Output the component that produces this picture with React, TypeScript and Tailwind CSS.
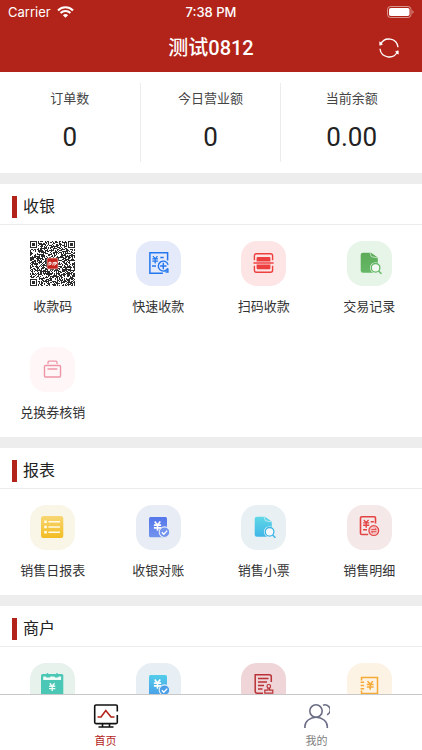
import type { ReactNode } from "react";

type Tile = { name: string; bg: string; icon: ReactNode; showName?: boolean };

function Yen({ x, y, color, s = 1 }: { x: number; y: number; color: string; s?: number }) {
  return (
    <path
      transform={`translate(${x} ${y}) scale(${s})`}
      d="M-2.8 -4.4 0 -1 2.8 -4.4M-3.6 -0.9H3.6M-3.6 1.9H3.6M0 -1V4.8"
      fill="none"
      stroke={color}
      strokeWidth="1.6"
    />
  );
}

function Art({ children }: { children: ReactNode }) {
  return (
    <svg viewBox="0 0 45 45" className="size-full" fill="none" aria-hidden="true">
      {children}
    </svg>
  );
}

const QR_SIZE = 45;

function inFinder(x: number, y: number) {
  const far = QR_SIZE - 8;
  return (x < 8 && y < 8) || (x >= far && y < 8) || (x < 8 && y >= far);
}

function qrModules() {
  let seed = 20812;
  let d = "";
  for (let y = 0; y < QR_SIZE; y++) {
    for (let x = 0; x < QR_SIZE; x++) {
      seed = (seed * 1103515245 + 12345) % 2147483648;
      if (!inFinder(x, y) && (seed >> 12) % 100 < 56) d += `M${x} ${y}h1v1h-1z`;
    }
  }
  return d;
}

const QR_PATH = qrModules();

function QrCode() {
  const far = QR_SIZE - 7;
  return (
    <svg viewBox={`0 0 ${QR_SIZE} ${QR_SIZE}`} className="size-full" aria-hidden="true">
      <path d={QR_PATH} fill="#2b2b2b" />
      {[[0, 0], [far, 0], [0, far]].map(([x, y]) => (
        <g key={`${x}-${y}`}>
          <rect x={x + 0.5} y={y + 0.5} width="6" height="6" fill="#fff" stroke="#2b2b2b" />
          <rect x={x + 2} y={y + 2} width="3" height="3" fill="#2b2b2b" />
        </g>
      ))}
      <rect x="17" y="17" width="11" height="11" rx="1.5" fill="#c4241c" stroke="#f0d8d6" strokeWidth="0.6" />
      <path d="M19 24.5v-3.200h2v2h-1.400M22.800 24.500l.6-3.400M24 21.400h2.400v1.400h-2.200M24.500 24.500l1-1.600" stroke="#fff" strokeWidth="1" fill="none" />
    </svg>
  );
}

function QuickPayIcon() {
  return (
    <Art>
      <path d="M31.600 19.500V11.800H13.900v20.500h13" stroke="#2477ee" strokeWidth="1.500" />
      <Yen x={19.2} y={18.6} s={0.8} color="#2477ee" />
      <path d="M24.300 16.600h3.400M16 25h4" stroke="#2477ee" strokeWidth="1.500" />
      <path d="M31.800 27.300a5 5 0 1 1 .3-3.600M31.900 27.600v4.200M29.600 31h3" stroke="#2477ee" strokeWidth="1.400" />
      <path d="M27.300 21.800v6.400M24.100 25h6.400" stroke="#2477ee" strokeWidth="1.400" />
    </Art>
  );
}

function ScanIcon() {
  return (
    <Art>
      <path d="M13.400 19.200v-4.400a2 2 0 0 1 2-2h14.200a2 2 0 0 1 2 2v4.400M13.400 24.800v4.400a2 2 0 0 0 2 2h14.200a2 2 0 0 0 2-2v-4.400" stroke="#ee3f3f" strokeWidth="1.400" />
      <path d="M12.400 22h20.200" stroke="#ee3f3f" strokeWidth="1.500" />
      <path d="M15.600 20.600v-3.400a1.200 1.200 0 0 1 1.200-1.200h11.400a1.200 1.200 0 0 1 1.200 1.200v3.400zM15.600 23.600v3.400a1.200 1.200 0 0 0 1.200 1.200h11.400a1.200 1.200 0 0 0 1.200-1.200v-3.400z" fill="#ee3f3f" />
    </Art>
  );
}

function DocSearchIcon({ id, from, to, bg }: { id: string; from: string; to: string; bg: string }) {
  return (
    <Art>
      <defs>
        <linearGradient id={id} x1="0" y1="0" x2="0" y2="1">
          <stop stopColor={from} />
          <stop offset="1" stopColor={to} />
        </linearGradient>
      </defs>
      <path d="M16 11.800h8l6.800 4.600V31.800H16a2.300 2.300 0 0 1-2.300-2.300V14.100A2.300 2.300 0 0 1 16 11.800z" fill={`url(#${id})`} />
      <path d="M23 11.800l1.400 4 6.400 1" stroke={bg} strokeWidth="0.700" />
      <circle cx="28.600" cy="26.800" r="5.600" fill={bg} />
      <circle cx="28.600" cy="26.800" r="4.300" fill="#fff" fillOpacity="0.5" stroke={to} strokeWidth="1.300" />
      <path d="M31.600 30l2.800 2.800" stroke={to} strokeWidth="1.600" />
    </Art>
  );
}

function VoucherIcon() {
  return (
    <Art>
      <rect x="14.500" y="18.500" width="16" height="11.500" rx="1" stroke="#f095a6" strokeWidth="1.400" />
      <path d="M18 17v-1.800a1 1 0 0 1 1-1h7a1 1 0 0 1 1 1V17M17.500 22h9.800" stroke="#f095a6" strokeWidth="1.300" />
    </Art>
  );
}

function ListIcon() {
  return (
    <Art>
      <defs>
        <linearGradient id="list" x1="0" y1="0" x2="0" y2="1">
          <stop stopColor="#f8d673" />
          <stop offset="1" stopColor="#f2bd22" />
        </linearGradient>
      </defs>
      <rect x="11" y="11" width="22.300" height="22" rx="2.500" fill="url(#list)" />
      <path d="M18.500 16.800h11.500M18.500 22h11.500M18.500 27.300h11.500" stroke="#fffbe6" strokeWidth="1.400" />
      <path d="M14.200 16.800h2.600M14.200 22h2.600M14.200 27.300h2.600" stroke="#fffbe6" strokeWidth="2.500" />
    </Art>
  );
}

function DocCheckIcon({ id, from, to, ring }: { id: string; from: string; to: string; ring: string }) {
  return (
    <Art>
      <defs>
        <linearGradient id={id} x1="0" y1="0" x2="0" y2="1">
          <stop stopColor={from} />
          <stop offset="1" stopColor={to} />
        </linearGradient>
      </defs>
      <rect x="13" y="12" width="18" height="20.300" rx="1.500" fill={`url(#${id})`} />
      <Yen x={21.5} y={21} color="#fff" />
      <circle cx="28.500" cy="27.200" r="5.300" fill={to} stroke={ring} strokeWidth="1.100" />
      <path d="M25.800 27.200l2 2 3.400-3.600" stroke="#fff" strokeWidth="1.300" />
    </Art>
  );
}

function DetailIcon() {
  return (
    <Art>
      <path d="M28.500 18.500V13a1.300 1.300 0 0 0-1.300-1.300H14.800a1.300 1.300 0 0 0-1.300 1.300v15.200a1.300 1.300 0 0 0 1.300 1.300h6.400" stroke="#e34343" strokeWidth="1.600" />
      <Yen x={19.2} y={18.6} s={0.85} color="#e34343" />
      <path d="M23.700 16.800h3.200M16 24.800h4" stroke="#e34343" strokeWidth="1.400" />
      <circle cx="26.800" cy="25.600" r="4.900" fill="#f4c5c5" stroke="#e34343" strokeWidth="1.200" />
      <path d="M24.300 24.600h5l-1.500-1.400M29.300 26.700h-5l1.500 1.400" stroke="#e34343" strokeWidth="0.900" />
    </Art>
  );
}

function CalendarYenIcon() {
  return (
    <Art>
      <rect x="11" y="11" width="22.300" height="23" rx="1.500" fill="#4bc8b5" />
      <path d="M13.200 13.600h2.400l1 1h3l1-1h3.600l1 1h2.600l1-1h2.300v3.300H13.200z" fill="#eefaf6" />
      <path d="M17.500 10v3M27 10v3" stroke="#4bc8b5" strokeWidth="1.400" />
      <Yen x={22.2} y={24} s={0.85} color="#eefaf6" />
    </Art>
  );
}

function StampIcon() {
  return (
    <Art>
      <path d="M30.300 19v-5.200a2 2 0 0 0-2-2H14.200v16.400a2 2 0 0 0 2 2H22" stroke="#b93237" strokeWidth="1.500" />
      <path d="M17 15.500h10.500M17 19h9M17 22.500h6M17 26h4.500" stroke="#b93237" strokeWidth="1.300" />
      <circle cx="27.800" cy="23.300" r="1.800" stroke="#b93237" strokeWidth="1.200" />
      <path d="M27 25v2.200h-3.200v3h8v-3h-3.200V25" stroke="#b93237" strokeWidth="1.200" />
    </Art>
  );
}

function TicketYenIcon() {
  return (
    <Art>
      <path d="M14.500 17.500v-3h16v16h-16v-3" stroke="#f5a936" strokeWidth="1.500" />
      <path d="M13.600 19.300h3.500M13.600 22.500h3.500M13.600 25.700h3.500" stroke="#f5a936" strokeWidth="1.400" />
      <Yen x={23.2} y={22.3} s={0.95} color="#f5a936" />
    </Art>
  );
}

const SECTIONS: { title: string; tiles: Tile[] }[] = [
  {
    title: "收银",
    tiles: [
      { name: "收款码", bg: "", icon: <QrCode /> },
      { name: "快速收款", bg: "bg-[#e5eafb]", icon: <QuickPayIcon /> },
      { name: "扫码收款", bg: "bg-[#fde5e6]", icon: <ScanIcon /> },
      { name: "交易记录", bg: "bg-[#e7f4e8]", icon: <DocSearchIcon id="records" from="#5cab58" to="#66b866" bg="#e7f4e8" /> },
      { name: "兑换券核销", bg: "bg-[#fef6f7]", icon: <VoucherIcon /> },
    ],
  },
  {
    title: "报表",
    tiles: [
      { name: "销售日报表", bg: "bg-[#f9f6e8]", icon: <ListIcon /> },
      { name: "收银对账", bg: "bg-[#e8edf5]", icon: <DocCheckIcon id="reconcile" from="#5576ea" to="#7294ee" ring="#e8edf5" /> },
      { name: "销售小票", bg: "bg-[#e9f0f4]", icon: <DocSearchIcon id="receipts" from="#5fd8e6" to="#3fb5e8" bg="#e9f0f4" /> },
      { name: "销售明细", bg: "bg-[#f5e8e8]", icon: <DetailIcon /> },
    ],
  },
  {
    title: "商户",
    tiles: [
      { name: "日结", bg: "bg-[#e7f2ec]", icon: <CalendarYenIcon />, showName: false },
      { name: "结算", bg: "bg-[#e7eff4]", icon: <DocCheckIcon id="settle" from="#52cdea" to="#4a9fe8" ring="#e7eff4" />, showName: false },
      { name: "签约", bg: "bg-[#efd5d7]", icon: <StampIcon />, showName: false },
      { name: "卡券", bg: "bg-[#fdf3e4]", icon: <TicketYenIcon />, showName: false },
    ],
  },
];

const STATS = [
  { label: "订单数", value: "0" },
  { label: "今日营业额", value: "0" },
  { label: "当前余额", value: "0.00" },
];

function StatusBar() {
  return (
    <div className="grid h-6 grid-cols-3 items-center px-2 font-['Inter','Noto_Sans_CJK_SC',sans-serif] text-[13px] leading-6">
      <div className="flex items-center gap-1.5">
        <span>Carrier</span>
        <svg viewBox="0 0 17 12" className="h-3 w-[17px]" fill="none" stroke="currentColor" strokeWidth="2.100" aria-hidden="true">
          <path d="M1 4.400a10.600 10.600 0 0 1 15 0M3.600 7.100a6.900 6.900 0 0 1 9.800 0" />
          <path d="M8.500 11.800 5.900 9.200a3.700 3.700 0 0 1 5.200 0z" fill="currentColor" stroke="none" />
        </svg>
      </div>
      <span className="text-center font-medium">7:38 PM</span>
      <svg viewBox="0 0 27 12" className="h-3 w-[27px] justify-self-end" fill="none" aria-hidden="true">
        <rect x="0.500" y="0.500" width="23.500" height="11" rx="3" stroke="#fff" strokeOpacity="0.5" />
        <rect x="2" y="2" width="20.500" height="8" rx="1.800" fill="#fff" />
        <path d="M25.300 4.200v3.600c.8-.3 1.300-1 1.300-1.800s-.5-1.500-1.300-1.800z" fill="#fff" fillOpacity="0.5" />
      </svg>
    </div>
  );
}

function Section({ title, tiles }: { title: string; tiles: Tile[] }) {
  return (
    <section className="bg-white">
      <h2 className="flex h-[41px] items-end gap-1.5 border-b border-[#ececec] px-3 pb-1.5 text-base leading-[22px] text-[#222]">
        <span className="h-[22px] w-[5px] bg-[#b22419]" />
        {title}
      </h2>
      <div className="grid grid-cols-4">
        {tiles.map((t) => (
          <button key={t.name} type="button" aria-label={t.name} className="flex h-[106px] flex-col items-center gap-[11px] pt-4">
            <span className={`block size-[45px] shrink-0 ${t.bg} ${t.bg ? "rounded-2xl" : ""}`}>{t.icon}</span>
            {t.showName !== false && <span className="text-[13px] leading-5 whitespace-nowrap text-[#333]">{t.name}</span>}
          </button>
        ))}
      </div>
    </section>
  );
}

export default function App() {
  return (
    <div className="flex h-screen flex-col bg-white font-['Roboto','Noto_Sans_CJK_SC',sans-serif]">
      <header className="shrink-0 bg-[#b22419] text-white">
        <StatusBar />
        <div className="grid h-12 grid-cols-[1fr_auto_1fr] items-center px-[22px]">
          <h1 className="col-start-2 text-xl leading-6 font-medium">测试0812</h1>
          <button type="button" aria-label="刷新" className="justify-self-end">
            <svg viewBox="0 0 22 22" className="size-[22px]" fill="none" stroke="currentColor" strokeWidth="1.300" aria-hidden="true">
              <path d="M2.600 7.200a9.200 9.200 0 0 1 17.400 3M19.400 14.800a9.200 9.200 0 0 1-17.400-3" />
              <path d="M1.800 4.800v3.400l2.600-.9zM20.200 17.200v-3.400l-2.600.9z" fill="currentColor" strokeWidth="0.800" />
            </svg>
          </button>
        </div>
      </header>

      <main className="min-h-0 flex-1 overflow-y-auto [scrollbar-width:none]">
        <div className="flex flex-col gap-[11px] bg-[#ededed]">
          <dl className="grid grid-cols-3 divide-x divide-[#ececec] bg-white py-[11px]">
            {STATS.map((s) => (
              <div key={s.label} className="flex h-[79px] flex-col items-center gap-3 pt-1.5">
                <dt className="text-[13px] leading-5 text-[#444]">{s.label}</dt>
                <dd className="text-[26px] leading-8 text-[#222]">{s.value}</dd>
              </div>
            ))}
          </dl>
          {SECTIONS.map((s) => (
            <Section key={s.title} title={s.title} tiles={s.tiles} />
          ))}
        </div>
      </main>

      <nav className="grid h-14 shrink-0 grid-cols-2 border-t border-[#c8c8c8] bg-white text-[11px] leading-4">
        <button type="button" className="flex flex-col items-center gap-[5px] pt-2 text-[#b22419]">
          <svg viewBox="0 0 26 26" className="size-[26px]" fill="none" aria-hidden="true">
            <path d="M24.300 8.500V3.300a1.300 1.300 0 0 0-1.300-1.300H3a1.300 1.300 0 0 0-1.300 1.300v16A1.300 1.300 0 0 0 3 20.600h20a1.300 1.300 0 0 0 1.300-1.300V12" stroke="#111" strokeWidth="1.600" />
            <path d="M9.500 20.600v3M16.500 20.600v3M5.500 24h15" stroke="#111" strokeWidth="1.600" />
            <path d="M4.500 14H8l4.800-6.500L18 14h3.500" stroke="#b22419" strokeWidth="1.600" />
          </svg>
          首页
        </button>
        <button type="button" className="flex flex-col items-center gap-[5px] pt-2 text-[#808080]">
          <svg viewBox="0 0 26 26" className="size-[26px]" fill="none" stroke="#6b6d85" strokeWidth="1.600" aria-hidden="true">
            <circle cx="12" cy="8" r="6.200" />
            <path d="M0.900 25v-1.500a11.200 9.200 0 0 1 22.400 0V25" />
            <path d="M19 2.200a5.200 5.200 0 0 1 4 9.600" />
          </svg>
          我的
        </button>
      </nav>
    </div>
  );
}
